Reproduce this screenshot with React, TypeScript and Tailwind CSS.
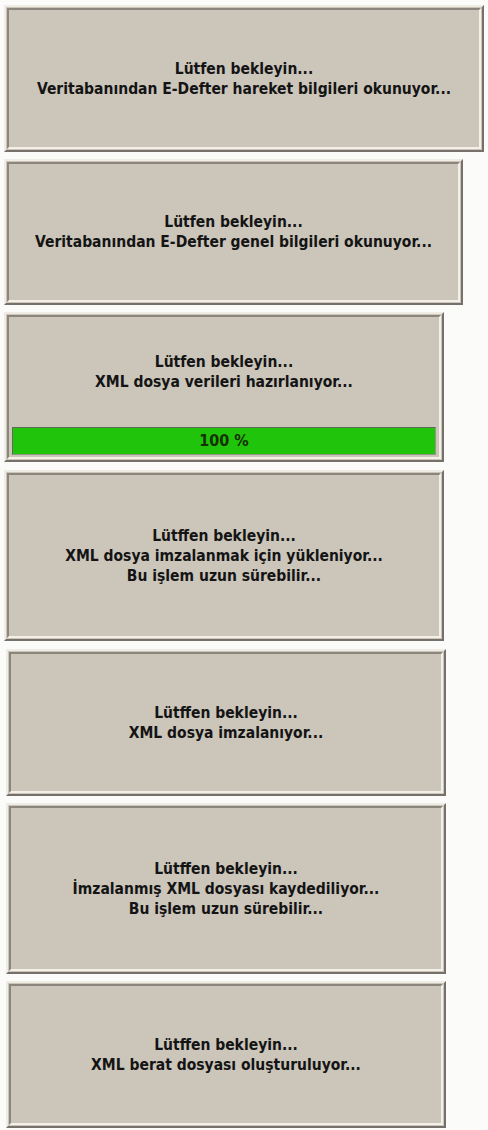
const WAIT = "Lütfen bekleyin...";

interface PanelProps {
  lines: string[];
  box: string;
  progress?: number;
}

function Panel({ lines, box, progress }: PanelProps) {
  return (
    <div
      className={`${box} shrink-0 border-2 border-t-[#efece5] border-l-[#efece5] border-b-[#75716a] border-r-[#75716a] bg-[#cbc5ba] p-px`}
    >
      <div className="flex h-full flex-col border-2 border-t-[#8a857d] border-l-[#8a857d] border-b-[#f3f0e9] border-r-[#f3f0e9]">
        <div className="flex flex-1 flex-col items-center justify-center text-center text-[15.5px] leading-[20px] font-bold text-[#141414]">
          {lines.map((l) => (
            <div key={l}>{l}</div>
          ))}
        </div>
        {progress !== undefined && (
          <div className="mx-[3px] mb-[2px] flex h-[28px] items-center justify-center border border-t-[#5f6b58] border-l-[#5f6b58] border-b-[#8f9a86] border-r-[#8f9a86] bg-[#1fc40b] text-[16px] font-bold text-[#173000]">
            {progress} %
          </div>
        )}
      </div>
    </div>
  );
}

export default function App() {
  return (
    <div
      className="flex min-h-[1130px] w-[488px] flex-col bg-[#fbfbfa] pt-[5px]"
      style={{ fontFamily: '"DejaVu Sans Condensed", "DejaVu Sans", sans-serif' }}
    >
      <Panel
        box="ml-[4px] w-[480px] h-[147px]"
        lines={[WAIT, "Veritabanından E-Defter hareket bilgileri okunuyor..."]}
      />
      <Panel
        box="ml-[4px] mt-[7px] w-[459px] h-[146px]"
        lines={[WAIT, "Veritabanından E-Defter genel bilgileri okunuyor..."]}
      />
      <Panel
        box="ml-[4px] mt-[7px] w-[440px] h-[150px]"
        lines={[WAIT, "XML dosya verileri hazırlanıyor..."]}
        progress={100}
      />
      <Panel
        box="ml-[4px] mt-[8px] w-[440px] h-[171px]"
        lines={["Lütffen bekleyin...", "XML dosya imzalanmak için yükleniyor...", "Bu işlem uzun sürebilir..."]}
      />
      <Panel
        box="ml-[6px] mt-[8px] w-[440px] h-[147px]"
        lines={["Lütffen bekleyin...", "XML dosya imzalanıyor..."]}
      />
      <Panel
        box="ml-[6px] mt-[7px] w-[440px] h-[171px]"
        lines={["Lütffen bekleyin...", "İmzalanmış XML dosyası kaydediliyor...", "Bu işlem uzun sürebilir..."]}
      />
      <Panel
        box="ml-[6px] mt-[7px] w-[440px] h-[147px]"
        lines={["Lütffen bekleyin...", "XML berat dosyası oluşturuluyor..."]}
      />
    </div>
  );
}
